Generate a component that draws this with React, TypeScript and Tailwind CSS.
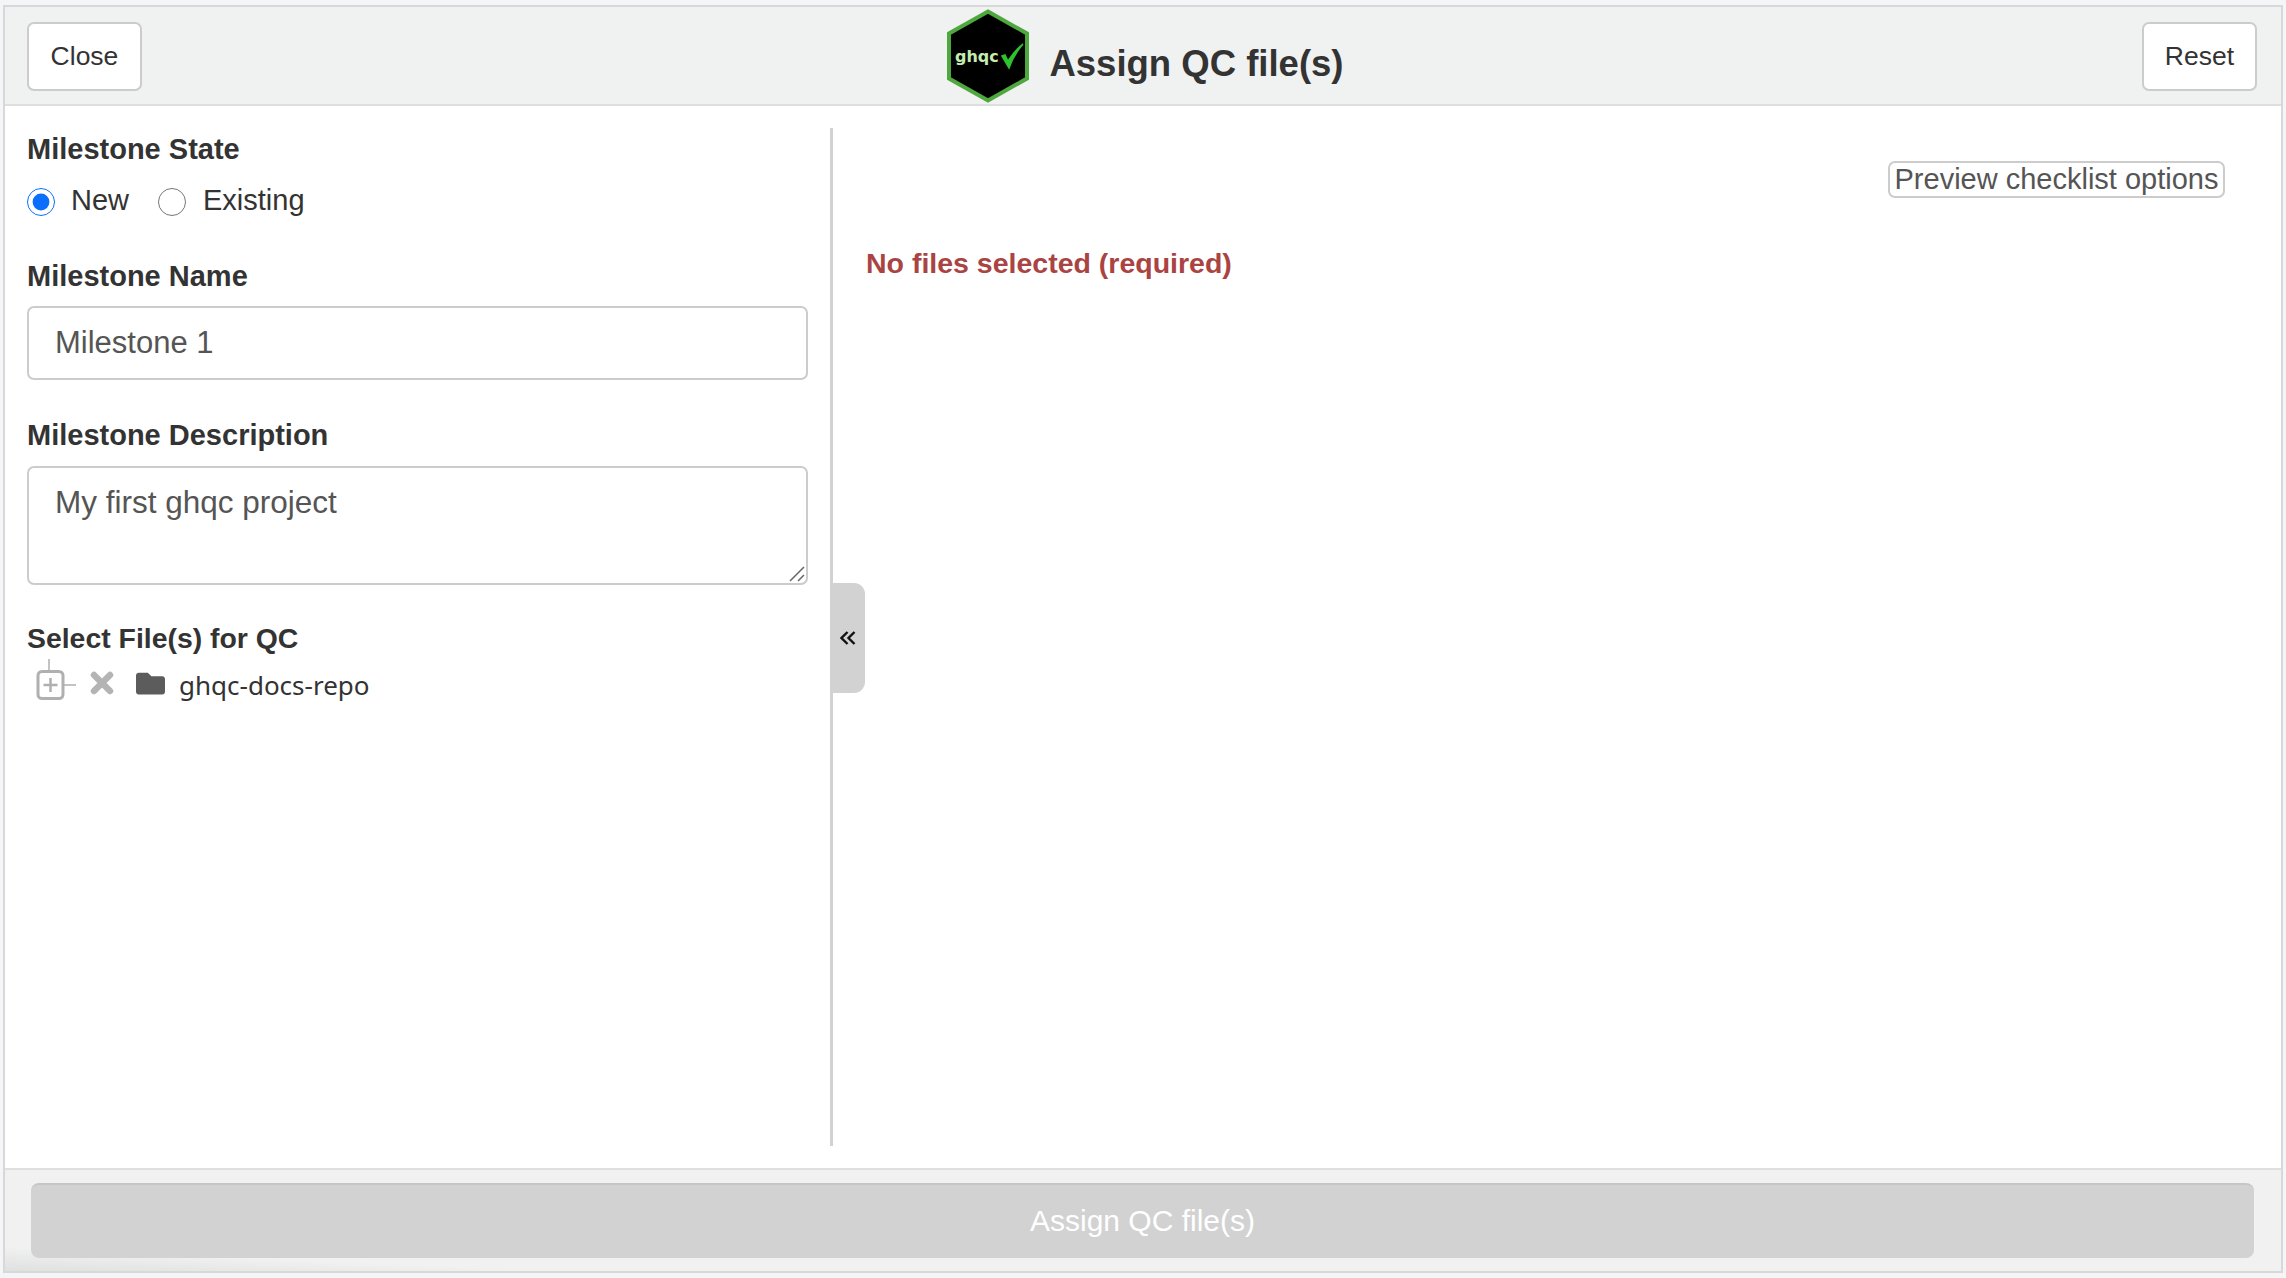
import { FaFolder } from "react-icons/fa";

function Logo() {
  return (
    <svg width="84" height="94" viewBox="0 0 84 94" className="shrink-0">
      <polygon points="42,2.5 81,24.5 81,69.5 42,91.5 3,69.5 3,24.5" fill="#000" stroke="#4fa83d" strokeWidth="4" />
      <text x="9" y="53" fontFamily="'DejaVu Sans', sans-serif" fontWeight="700" fontSize="16" fill="#c4ecb0">
        ghqc
      </text>
      <path d="M56 47 L63 59 C66 50 71 42 77 35 C70 40 66 46 62 52 L59 46 Z" fill="#2fc22f" stroke="#2fc22f" strokeWidth="1.5" />
    </svg>
  );
}

function TreeToggle() {
  return (
    <svg width="40" height="44" viewBox="0 0 40 44" className="shrink-0 -mt-[4px] text-[#b0b0b0]">
      <path d="M13 0 V13 M27 26 H40" stroke="currentColor" strokeWidth="1.5" fill="none" />
      <rect x="2" y="12.5" width="25" height="27" rx="4" stroke="currentColor" strokeWidth="3" fill="none" />
      <path d="M14.5 19 V33 M7.5 26 H21.5" stroke="currentColor" strokeWidth="2.5" fill="none" />
    </svg>
  );
}

function TreeClose() {
  return (
    <svg width="24" height="24" viewBox="0 0 24 24" className="shrink-0 text-[#b4b4b4]">
      <path d="M4 4 L20 20 M20 4 L4 20" stroke="currentColor" strokeWidth="6.5" strokeLinecap="round" fill="none" />
    </svg>
  );
}

function Label({ children }: { children: string }) {
  return <div className="font-bold text-[29px] leading-[40px] text-[#333]">{children}</div>;
}

export default function App() {
  return (
    <div className="h-[1278px] bg-[#f3f5f6] pt-[5px] px-[3px] pb-[5px] font-['Liberation_Sans',sans-serif] text-[#333]">
      <div className="h-full flex flex-col bg-white border-2 border-[#d8d8d8] overflow-hidden">
        {/* Header */}
        <div className="h-[99px] shrink-0 pl-[22px] pr-[24px] flex items-center justify-between bg-[#f0f1f1] border-b-2 border-[#dfdfdf]">
          <button className="w-[115px] h-[69px] mt-[2px] bg-white border-2 border-[#cccccc] rounded-[7px] text-[26.5px]">Close</button>
          <div className="flex items-center gap-[19px] ml-[6px]">
            <Logo />
            <h1 className="font-bold text-[36.5px] mt-[18px] text-[#333]">Assign QC file(s)</h1>
          </div>
          <button className="w-[115px] h-[69px] mt-[2px] bg-white border-2 border-[#cccccc] rounded-[7px] text-[26.5px]">Reset</button>
        </div>

        {/* Body */}
        <div className="flex-1 min-h-0 flex pt-[22px] pb-[22px]">
          <div className="relative w-[828px] shrink-0 border-r-[3px] border-[#d2d2d2] pl-[22px] pr-[22px]">
            <div className="pt-[1px]">
              <Label>Milestone State</Label>
              <div className="flex items-center h-[48px] mt-[9px] text-[29px] text-[#333]">
                <input type="radio" name="state" defaultChecked className="w-[28px] h-[28px] m-0 accent-[#0b6efd]" />
                <span className="ml-[16px] -mt-[2px]">New</span>
                <input type="radio" name="state" className="w-[28px] h-[28px] m-0 ml-[29px]" />
                <span className="ml-[17px] -mt-[2px]">Existing</span>
              </div>
            </div>

            <div className="mt-[30px]">
              <Label>Milestone Name</Label>
              <input
                readOnly
                defaultValue="Milestone 1"
                className="block mt-[10px] w-full h-[74px] px-[26px] text-[31px] text-[#555] bg-white border-2 border-[#cccccc] rounded-[7px] outline-none"
              />
            </div>

            <div className="mt-[35px]">
              <Label>Milestone Description</Label>
              <div className="relative mt-[11px]">
                <textarea
                  readOnly
                  defaultValue="My first ghqc project"
                  className="block w-full h-[119px] px-[26px] py-[12px] text-[31.5px] leading-[44px] text-[#555] bg-white border-2 border-[#cccccc] rounded-[7px] outline-none resize-none"
                />
                {/* Resize grip */}
                <svg width="16" height="16" viewBox="0 0 16 16" className="absolute right-[3px] bottom-[3px] text-[#666]">
                  <path d="M1 15 L15 1 M9 15 L15 9" stroke="currentColor" strokeWidth="1.5" fill="none" />
                </svg>
              </div>
            </div>

            <div className="mt-[33px]">
              <div className="font-bold text-[28.4px] leading-[40px] text-[#333]">Select File(s) for QC</div>
              <div className="flex items-center h-[44px] mt-[3px] pl-[9px]">
                <TreeToggle />
                <div className="ml-[14px]">
                  <TreeClose />
                </div>
                <FaFolder className="ml-[22px] w-[29px] h-[29px] text-[#5c5c5c]" />
                <span className="ml-[14px] mt-[5px] font-['Noto_Sans',sans-serif] text-[26px] text-[#333]">ghqc-docs-repo</span>
              </div>
            </div>

            {/* Collapse handle */}
            <button className="absolute left-full top-[455px] w-[32px] h-[110px] ml-[3px] flex items-center justify-center bg-[#d2d2d2] rounded-r-[11px] text-[#111]">
              <svg width="16" height="16" viewBox="0 0 16 16" fill="none" stroke="currentColor" strokeWidth="2.4" className="-ml-[2px]">
                <path d="M7.5 2 L1.5 8 L7.5 14 M14.5 2 L8.5 8 L14.5 14" />
              </svg>
            </button>
          </div>

          <div className="flex-1 min-w-0 pl-[33px] pr-[56px]">
            <div className="flex justify-end pt-[33px]">
              <button className="h-[37px] w-[337px] bg-white border-2 border-[#cccccc] rounded-[7px] text-[29px] leading-none text-[#555] whitespace-nowrap">Preview checklist options</button>
            </div>
            <div className="mt-[44px] font-bold text-[28.5px] text-[#a94442]">No files selected (required)</div>
          </div>
        </div>

        {/* Footer */}
        <div className="h-[103px] shrink-0 pl-[26px] pr-[27px] flex items-center border-t-2 border-[#dfdfdf] bg-linear-to-tr from-[#dfe0e0] via-[#f1f1f1] via-[12%] to-[#f1f1f1]">
          <button disabled className="w-full h-[75px] mb-[1px] pb-[2px] bg-[#d2d2d2] border-t-2 border-[#c6c6c6] rounded-[8px] text-[30px] text-white">Assign QC file(s)</button>
        </div>
      </div>
    </div>
  );
}
